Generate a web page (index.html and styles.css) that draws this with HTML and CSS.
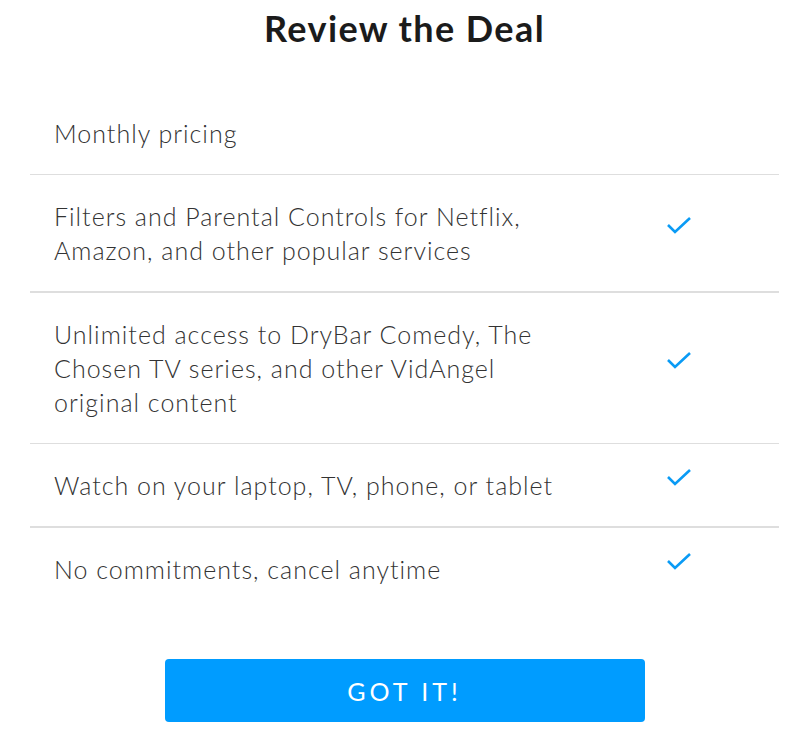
FILE: index.html
```html
<!DOCTYPE html>
<html lang="en">

<head>
    <meta charset="UTF-8">
    <meta name="viewport" content="width=device-width, initial-scale=1.0">
    <title>Review the Deal</title>
    <link rel="stylesheet" href="styles.css">
</head>

<body>
    <div class="deal">
        <h1>Review the Deal</h1>

        <ul class="deal-list">
            <li class="deal-row">
                <span class="deal-text">Monthly pricing</span>
            </li>
            <li class="deal-row thick">
                <span class="deal-text">Filters and Parental Controls for Netflix, Amazon, and other popular services</span>
                <span class="check">
                    <svg width="26" height="18" viewBox="0 0 26 18"><path d="M2 9 L9 16 L24 2" fill="none" stroke="#0a9bf5" stroke-width="2.6"/></svg>
                </span>
            </li>
            <li class="deal-row">
                <span class="deal-text">Unlimited access to DryBar Comedy, The Chosen TV series, and other VidAngel original content</span>
                <span class="check">
                    <svg width="26" height="18" viewBox="0 0 26 18"><path d="M2 9 L9 16 L24 2" fill="none" stroke="#0a9bf5" stroke-width="2.6"/></svg>
                </span>
            </li>
            <li class="deal-row thick">
                <span class="deal-text">Watch on your laptop, TV, phone, or tablet</span>
                <span class="check">
                    <svg width="26" height="18" viewBox="0 0 26 18"><path d="M2 9 L9 16 L24 2" fill="none" stroke="#0a9bf5" stroke-width="2.6"/></svg>
                </span>
            </li>
            <li class="deal-row last">
                <span class="deal-text">No commitments, cancel anytime</span>
                <span class="check">
                    <svg width="26" height="18" viewBox="0 0 26 18"><path d="M2 9 L9 16 L24 2" fill="none" stroke="#0a9bf5" stroke-width="2.6"/></svg>
                </span>
            </li>
        </ul>

        <button class="got-it">GOT IT!</button>
    </div>
</body>

</html>
```

FILE: styles.css
```css
body {
    margin: 0;
    font-family: Lato, "Open Sans", sans-serif;
    background-color: #fff;
    color: #333;
}

.deal {
    padding: 6px 25px 0 30px;
}

h1 {
    margin: 0;
    text-align: center;
    font-size: 36px;
    font-weight: 700;
    color: #1b1b1b;
    line-height: 44px;
    letter-spacing: 1.4px;
}

.deal-list {
    list-style: none;
    margin: 42px 0 0;
    padding: 0;
}

.deal-row {
    display: flex;
    align-items: center;
    padding: 24px;
    border-bottom: 1px solid #dedede;
}

.deal-row.thick {
    border-bottom-width: 2px;
}

.deal-row.last {
    border-bottom: none;
}

.deal-text {
    width: 500px;
    font-size: 25px;
    font-weight: 300;
    line-height: 34px;
    letter-spacing: 1px;
    color: #333;
}

.check {
    margin-left: auto;
    margin-right: 63px;
    margin-bottom: 16px;
    display: flex;
}

.got-it {
    display: block;
    width: 480px;
    height: 63px;
    margin: 49px auto 0;
    background-color: #009cff;
    color: #fff;
    border: none;
    border-radius: 4px;
    font-family: Lato, "Open Sans", sans-serif;
    font-size: 25px;
    font-weight: 400;
    letter-spacing: 4px;
    cursor: pointer;
}
```
